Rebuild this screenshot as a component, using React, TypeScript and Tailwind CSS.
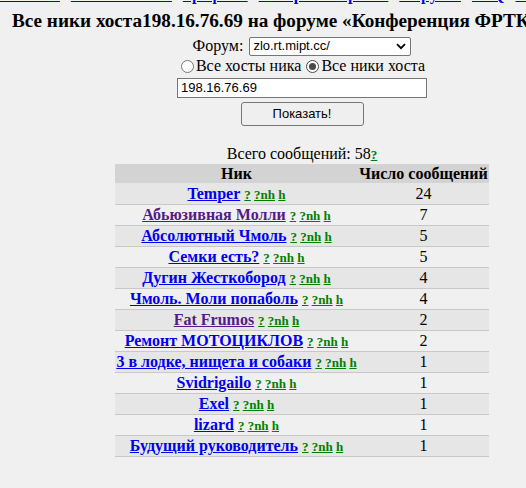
import React from 'react'

interface NickRow {
  nick: string
  count: number
  visited?: boolean
}

const rows: NickRow[] = [
  { nick: 'Temper', count: 24 },
  { nick: 'Абьюзивная Молли', count: 7, visited: true },
  { nick: 'Абсолютный Чмоль', count: 5 },
  { nick: 'Семки есть?', count: 5 },
  { nick: 'Дугин Жесткобород', count: 4 },
  { nick: 'Чмоль. Моли попаболь', count: 4 },
  { nick: 'Fat Frumos', count: 2, visited: true },
  { nick: 'Ремонт МОТОЦИКЛОВ', count: 2 },
  { nick: '3 в лодке, нищета и собаки', count: 1 },
  { nick: 'Svidrigailo', count: 1 },
  { nick: 'Exel', count: 1 },
  { nick: 'lizard', count: 1 },
  { nick: 'Будущий руководитель', count: 1 },
]

const navLinks = ['Главная', 'Пользователи', 'Графики', 'История запросов', 'Форумы', 'FAQ', 'Регистрация']

const serif = "font-['Liberation_Serif','Times_New_Roman',serif]"
const sans = "font-['Liberation_Sans',Arial,sans-serif]"

function Radio({ checked }: { checked?: boolean }) {
  return (
    <span
      className={`inline-flex items-center justify-center w-[13px] h-[13px] rounded-full border bg-white mx-[2px] ${
        checked ? 'border-[#4a4a4a]' : 'border-[#767676]'
      }`}
    >
      {checked && <span className="w-[7px] h-[7px] rounded-full bg-[#4a4a4a]" />}
    </span>
  )
}

export default function App() {
  return (
    <div className={`min-h-screen w-full overflow-hidden bg-[#f0f0f0] text-black ${serif}`}>
      <div className="w-[604px]">
        {/* верхнее меню, прокручено почти целиком за край */}
        <div className="h-[6px] overflow-hidden">
          <div className="-mt-[14px] flex gap-[11px] whitespace-nowrap text-[16px] leading-[18px] font-bold">
            {navLinks.map(l => (
              <a key={l} href="#" className="text-[#0000ee] underline">{l}</a>
            ))}
          </div>
        </div>

        <h2 className="mt-[3px] pl-[12px] whitespace-nowrap text-[19.2px] leading-[24px] font-bold">
          Все ники хоста198.16.76.69 на форуме «Конференция ФРТК-МФТИ»
        </h2>

        <form className="flex flex-col items-center mt-[3px]" onSubmit={e => e.preventDefault()}>
          <div className="flex items-center h-[20px] text-[16px]">
            <span className="mr-[6px]">Форум:</span>
            <div className={`flex items-center justify-between w-[162px] h-[19px] border border-[#767676] rounded-[2px] bg-white pl-[3px] pr-[4px] text-[13px] ${sans}`}>
              <span>zlo.rt.mipt.cc/</span>
              <svg width="10" height="7" viewBox="0 0 10 7">
                <path d="M1 1.2 L5 5.2 L9 1.2" fill="none" stroke="#000" strokeWidth="1.8" />
              </svg>
            </div>
          </div>

          <div className="flex items-center h-[20px] text-[16px] leading-[20px]">
            <Radio />
            <span>Все хосты ника</span>
            <span className="w-[3px]" />
            <Radio checked />
            <span>Все ники хоста</span>
          </div>

          <div className={`flex items-center w-[250px] h-[20px] mt-[2px] border border-[#767676] bg-white px-[3px] text-[13px] ${sans}`}>
            198.16.76.69
          </div>

          <button
            type="submit"
            className={`w-[123px] h-[24px] mt-[4px] border border-[#767676] rounded-[3px] bg-[#efefef] text-[13px] ${sans}`}
          >
            Показать!
          </button>
        </form>

        <div className="mt-[19px] text-center text-[16px] leading-[18px]">
          Всего сообщений: 58
          <a href="#" className="text-[13px] font-bold text-[#008000] underline">?</a>
        </div>

        <table className="mx-auto border-collapse text-[16px]">
          <thead>
            <tr className="bg-[#d3d3d3] h-[19px]">
              <th className="w-[243px] p-0 font-bold leading-[19px]">Ник</th>
              <th className="w-[131px] p-0 font-bold leading-[19px]">Число сообщений</th>
            </tr>
          </thead>
          <tbody>
            {rows.map((r, i) => (
              <tr key={r.nick} className={`h-[21px] border-b border-[#c8c8c8] ${i % 2 === 0 ? 'bg-[#e6e6e6]' : ''}`}>
                <td className="p-0 text-center leading-[17px] whitespace-nowrap">
                  <a href="#" className={`font-bold underline ${r.visited ? 'text-[#551a8b]' : 'text-[#0000ee]'}`}>
                    {r.nick}
                  </a>{' '}
                  <span className="text-[13px] leading-[15px] font-bold">
                    <a href="#" className="text-[#008000] underline">?</a>{' '}
                    <a href="#" className="text-[#008000] underline">?nh</a>{' '}
                    <a href="#" className="text-[#008000] underline">h</a>
                  </span>
                </td>
                <td className="p-0 text-center leading-[17px]">{r.count}</td>
              </tr>
            ))}
          </tbody>
        </table>
      </div>
    </div>
  )
}
